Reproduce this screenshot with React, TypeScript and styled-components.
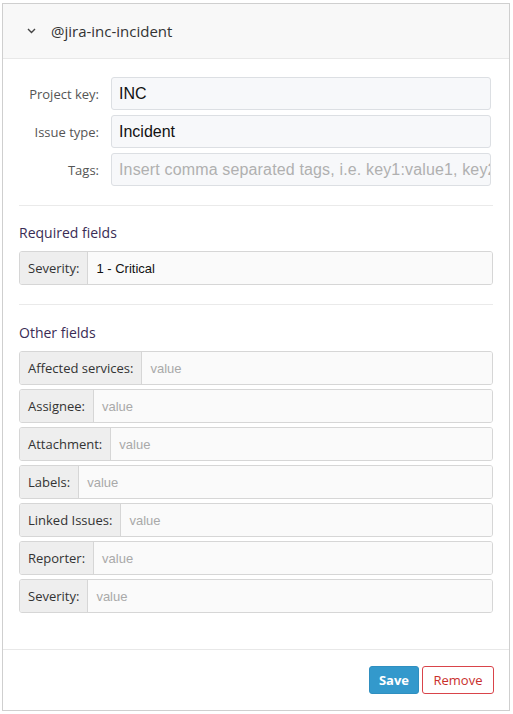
import React from "react";
import styled, { createGlobalStyle } from "styled-components";

const Global = createGlobalStyle`
  html, body { margin: 0; padding: 0; background: #fff; }
  body { font-family: "Open Sans", "Noto Sans", sans-serif; color: #333; }
  * { box-sizing: border-box; }
`;

const Page = styled.div`
  padding: 3px 4px 3px 2px;
`;

const Card = styled.div`
  width: 508px;
  height: 708px;
  border: 1px solid #cfcfcf;
  display: flex;
  flex-direction: column;
  background: #fff;
`;

const Header = styled.div`
  height: 55px;
  background: #f8f8f8;
  border-bottom: 1px solid #e8e8e8;
  display: flex;
  align-items: center;
  padding-left: 24px;
  gap: 15px;
  font-size: 15px;
  color: #333;
`;

const Body = styled.div`
  flex: 1;
  padding: 18px 16px 0 16px;
  display: flex;
  flex-direction: column;
`;

const FormRow = styled.div`
  display: grid;
  grid-template-columns: 80px 1fr;
  column-gap: 12px;
  align-items: center;
  margin-right: 2px;
  margin-bottom: 5px;
`;

const RowLabel = styled.label`
  text-align: right;
  font-size: 13px;
  color: #555;
`;

const TextInput = styled.div<{ $placeholder?: boolean }>`
  height: 33px;
  border: 1px solid #dcdfe3;
  border-radius: 3px;
  background: #f7f8fa;
  display: flex;
  align-items: center;
  padding: 0 7px;
  font-family: "Liberation Sans", Arial, sans-serif;
  font-size: 16px;
  letter-spacing: ${(p) => (p.$placeholder ? "0.15px" : "0")};
  color: ${(p) => (p.$placeholder ? "#b0b0b0" : "#111")};
  white-space: nowrap;
  overflow: hidden;
`;

const Spacer = styled.div<{ $h: number }>`
  height: ${(p) => p.$h}px;
  flex: none;
`;

const Divider = styled.hr`
  border: none;
  border-top: 1px solid #eaeaea;
  margin: 0;
  width: 100%;
`;

const SectionTitle = styled.div<{ $top: number }>`
  font-size: 14px;
  color: #3a2c55;
  margin: ${(p) => p.$top}px 0 9px 0;
`;

const Group = styled.div`
  display: flex;
  height: 34px;
  border: 1px solid #d6d6d6;
  border-radius: 3px;
  overflow: hidden;
  margin-bottom: 4px;
`;

const Addon = styled.div`
  background: #eeeeee;
  border-right: 1px solid #d6d6d6;
  display: flex;
  align-items: center;
  padding: 0 8px;
  font-size: 13px;
  color: #333;
  white-space: nowrap;
`;

const GroupValue = styled.div<{ $placeholder?: boolean }>`
  flex: 1;
  background: #fafafa;
  display: flex;
  align-items: center;
  padding: 0 8px;
  font-family: "Liberation Sans", Arial, sans-serif;
  font-size: 13px;
  color: ${(p) => (p.$placeholder ? "#a9a9a9" : "#111")};
`;

const Footer = styled.div`
  border-top: 1px solid #e8e8e8;
  height: 61px;
  display: flex;
  justify-content: flex-end;
  align-items: flex-start;
  padding: 16px 15px 0 0;
  gap: 3px;
`;

const Button = styled.button<{ $variant: "primary" | "danger" }>`
  height: 28px;
  border-radius: 3px;
  font-family: "Open Sans", sans-serif;
  font-size: 13px;
  padding: 0 8px;
  cursor: pointer;
  ${(p) =>
    p.$variant === "primary"
      ? `background: #3399cc; border: 1px solid #2f8fc0; color: #fff; font-weight: 700; width: 50px;`
      : `background: #fff; border: 1px solid #d9444a; color: #c9302c; width: 72px;`}
`;

const Chevron = () => (
  <svg width="9" height="6" viewBox="0 0 9 6">
    <polyline points="1,1 4.5,4.5 8,1" fill="none" stroke="#444" strokeWidth="1.4" />
  </svg>
);

const otherFields = [
  "Affected services:",
  "Assignee:",
  "Attachment:",
  "Labels:",
  "Linked Issues:",
  "Reporter:",
  "Severity:",
];

export default function App() {
  return (
    <>
      <Global />
      <Page>
        <Card>
          <Header>
            <Chevron />
            <span>@jira-inc-incident</span>
          </Header>
          <Body>
            <FormRow>
              <RowLabel>Project key:</RowLabel>
              <TextInput>INC</TextInput>
            </FormRow>
            <FormRow>
              <RowLabel>Issue type:</RowLabel>
              <TextInput>Incident</TextInput>
            </FormRow>
            <FormRow>
              <RowLabel>Tags:</RowLabel>
              <TextInput $placeholder>Insert comma separated tags, i.e. key1:value1, key2:value2</TextInput>
            </FormRow>
            <Spacer $h={14} />
            <Divider />
            <SectionTitle $top={17}>Required fields</SectionTitle>
            <Group>
              <Addon>Severity:</Addon>
              <GroupValue>1 - Critical</GroupValue>
            </Group>
            <Spacer $h={15} />
            <Divider />
            <SectionTitle $top={18}>Other fields</SectionTitle>
            {otherFields.map((f) => (
              <Group key={f}>
                <Addon>{f}</Addon>
                <GroupValue $placeholder>value</GroupValue>
              </Group>
            ))}
          </Body>
          <Footer>
            <Button $variant="primary">Save</Button>
            <Button $variant="danger">Remove</Button>
          </Footer>
        </Card>
      </Page>
    </>
  );
}
